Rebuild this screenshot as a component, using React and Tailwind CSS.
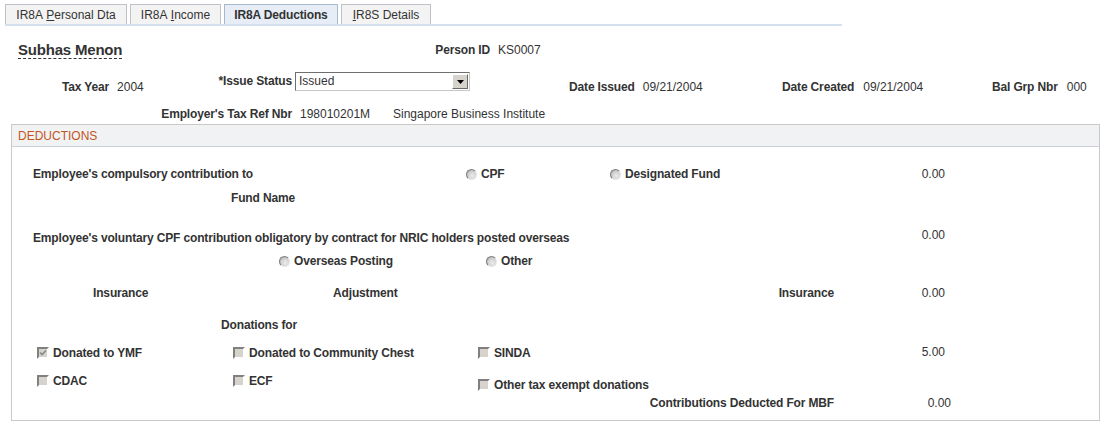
import React from "react";

const Radio = () => (
  <span className="inline-block w-[11px] h-[11px] rounded-full bg-[radial-gradient(circle_at_60%_65%,#ececec_0%,#cfcfcf_55%,#9a9a9a_100%)] border border-t-[#7c7c7c] border-l-[#7c7c7c] border-r-[#e6e6e6] border-b-[#e6e6e6] shrink-0" />
);

const Check = ({ checked }) => (
  <span className="inline-flex items-center justify-center w-[12px] h-[12px] bg-[#d6d3cc] border-2 border-t-[#808080] border-l-[#808080] border-r-[#ffffff] border-b-[#ffffff] shrink-0">
    {checked && (
      <svg width="8" height="8" viewBox="0 0 8 8">
        <path d="M1 3.5 L3 5.5 L7 1.5" stroke="#8a8a8a" strokeWidth="1.6" fill="none" />
      </svg>
    )}
  </span>
);

const Label = ({ children, className = "" }) => (
  <span className={"font-bold tracking-[-0.15px] " + className}>{children}</span>
);

export default function App() {
  return (
    <div className="w-[1107px] h-[427px] bg-white text-[12px] text-[#333333] font-['Liberation_Sans',Arial,sans-serif] overflow-hidden">
      {/* tabs */}
      <div className="pt-[4px] pl-[5px]">
        <div className="flex gap-[3px] h-[20px]">
          <div className="w-[122px] flex items-center justify-center border border-b-0 border-[#bcc2c8] bg-[#f3f3f3]">
            IR8A&nbsp;<span className="underline">P</span>ersonal Dta
          </div>
          <div className="w-[91px] flex items-center justify-center border border-b-0 border-[#bcc2c8] bg-[#f3f3f3]">
            IR8A&nbsp;<span className="underline">I</span>ncome
          </div>
          <div className="w-[114px] flex items-center justify-center border border-b-0 border-[#a9b9cc] bg-[#e6edf6] font-bold tracking-[-0.15px]">
            IR8A Deductions
          </div>
          <div className="w-[90px] flex items-center justify-center border border-b-0 border-[#bcc2c8] bg-[#f3f3f3]">
            <span className="underline">I</span>R8S Details
          </div>
        </div>
        <div className="w-[837px] h-[2px] bg-[#d5e0ee]" />
      </div>

      {/* name row */}
      <div className="mt-[14px] h-[20px] flex items-center">
        <div className="w-[412px] pl-[18px]">
          <span className="inline-block text-[15px] tracking-[-0.2px] font-bold leading-[17px] border-b border-dashed border-[#333333]">
            Subhas Menon
          </span>
        </div>
        <div className="w-[78px] text-right"><Label>Person ID</Label></div>
        <span className="ml-[8px]">KS0007</span>
      </div>

      {/* tax year row */}
      <div className="mt-[12px] h-[20px] flex items-start">
        <div className="w-[62px]" />
        <div className="w-[152px] pt-[8px] leading-[14px] flex gap-[8px]">
          <Label>Tax Year</Label>
          <span>2004</span>
        </div>
        <div className="w-[81px] pr-[3px] text-right leading-[19px]">
          <Label>*Issue Status</Label>
        </div>
        <div className="w-[175px] h-[19px] flex border border-t-[#6f6f6f] border-l-[#6f6f6f] border-r-[#c8c8c8] border-b-[#c8c8c8] bg-white">
          <span className="flex-1 pl-[3px] leading-[17px]">Issued</span>
          <span className="w-[16px] h-[15px] mt-[1px] mr-[1px] flex items-center justify-center bg-[#d6d3cc] border border-t-[#ffffff] border-l-[#ffffff] border-r-[#6a6a6a] border-b-[#6a6a6a]">
            <svg width="7" height="4" viewBox="0 0 7 4">
              <path d="M0 0 H7 L3.5 4 Z" fill="#000" />
            </svg>
          </span>
        </div>
        <div className="w-[99px]" />
        <div className="w-[213px] pt-[8px] leading-[14px] flex gap-[8px]">
          <Label>Date Issued</Label>
          <span>09/21/2004</span>
        </div>
        <div className="w-[210px] pt-[8px] leading-[14px] flex gap-[9px]">
          <Label>Date Created</Label>
          <span>09/21/2004</span>
        </div>
        <div className="pt-[8px] leading-[14px] flex gap-[9px]">
          <Label>Bal Grp Nbr</Label>
          <span>000</span>
        </div>
      </div>

      {/* employer row */}
      <div className="mt-[15px] h-[14px] flex items-center">
        <div className="w-[292px] text-right"><Label>Employer's Tax Ref Nbr</Label></div>
        <span className="w-[101px] pl-[8px]">198010201M</span>
        <span>Singapore Business Institute</span>
      </div>

      {/* deductions box */}
      <div className="mt-[3px] ml-[11px] w-[1089px] h-[297px] border border-[#c9c9c9]">
        <div className="h-[22px] bg-[#f0f2f4] border-b border-[#cdd2d8] flex items-center pl-[6px] text-[#c4551d]">
          DEDUCTIONS
        </div>

        <div className="mt-[15px] h-[24px] flex items-center">
          <div className="w-[454px] pl-[21px]"><Label>Employee's compulsory contribution to</Label></div>
          <div className="w-[144px] flex items-center gap-[4px]">
            <Radio />
            <Label>CPF</Label>
          </div>
          <div className="w-[270px] flex items-center gap-[4px]">
            <Radio />
            <Label>Designated Fund</Label>
          </div>
          <div className="w-[65px] text-right">0.00</div>
        </div>

        <div className="h-[24px] flex items-center pl-[219px]">
          <Label>Fund Name</Label>
        </div>

        <div className="mt-[14px] h-[24px] flex items-center">
          <div className="w-[868px] pl-[21px] pt-[4px]">
            <Label>Employee's voluntary CPF contribution obligatory by contract for NRIC holders posted overseas</Label>
          </div>
          <div className="w-[65px] text-right pb-[2px]">0.00</div>
        </div>

        <div className="mt-[1px] h-[24px] flex items-center pl-[267px]">
          <div className="w-[207px] flex items-center gap-[4px]">
            <Radio />
            <Label>Overseas Posting</Label>
          </div>
          <div className="flex items-center gap-[4px]">
            <Radio />
            <Label>Other</Label>
          </div>
        </div>

        <div className="mt-[8px] h-[24px] flex items-center">
          <div className="w-[321px] pl-[81px]"><Label>Insurance</Label></div>
          <div className="w-[427px]"><Label>Adjustment</Label></div>
          <div className="w-[74px] text-right"><Label>Insurance</Label></div>
          <div className="w-[111px] text-right">0.00</div>
        </div>

        <div className="mt-[8px] h-[24px] flex items-center pl-[209px]">
          <Label>Donations for</Label>
        </div>

        <div className="mt-[4px] h-[24px] flex items-center pl-[25px]">
          <div className="w-[196px] flex items-center gap-[4px]">
            <Check checked />
            <Label>Donated to YMF</Label>
          </div>
          <div className="w-[245px] flex items-center gap-[4px]">
            <Check />
            <Label>Donated to Community Chest</Label>
          </div>
          <div className="w-[402px] flex items-center gap-[4px]">
            <Check />
            <Label>SINDA</Label>
          </div>
          <div className="w-[65px] text-right pb-[3px]">5.00</div>
        </div>

        <div className="mt-[6px] h-[20px] flex items-center pl-[25px]">
          <div className="w-[196px] flex items-center gap-[4px]">
            <Check />
            <Label>CDAC</Label>
          </div>
          <div className="w-[245px] flex items-center gap-[4px]">
            <Check />
            <Label>ECF</Label>
          </div>
          <div className="flex items-center gap-[4px] pt-[8px]">
            <Check />
            <Label>Other tax exempt donations</Label>
          </div>
        </div>

        <div className="h-[24px] flex items-center">
          <div className="w-[822px] text-right"><Label>Contributions Deducted For MBF</Label></div>
          <div className="w-[117px] text-right">0.00</div>
        </div>
      </div>
    </div>
  );
}
